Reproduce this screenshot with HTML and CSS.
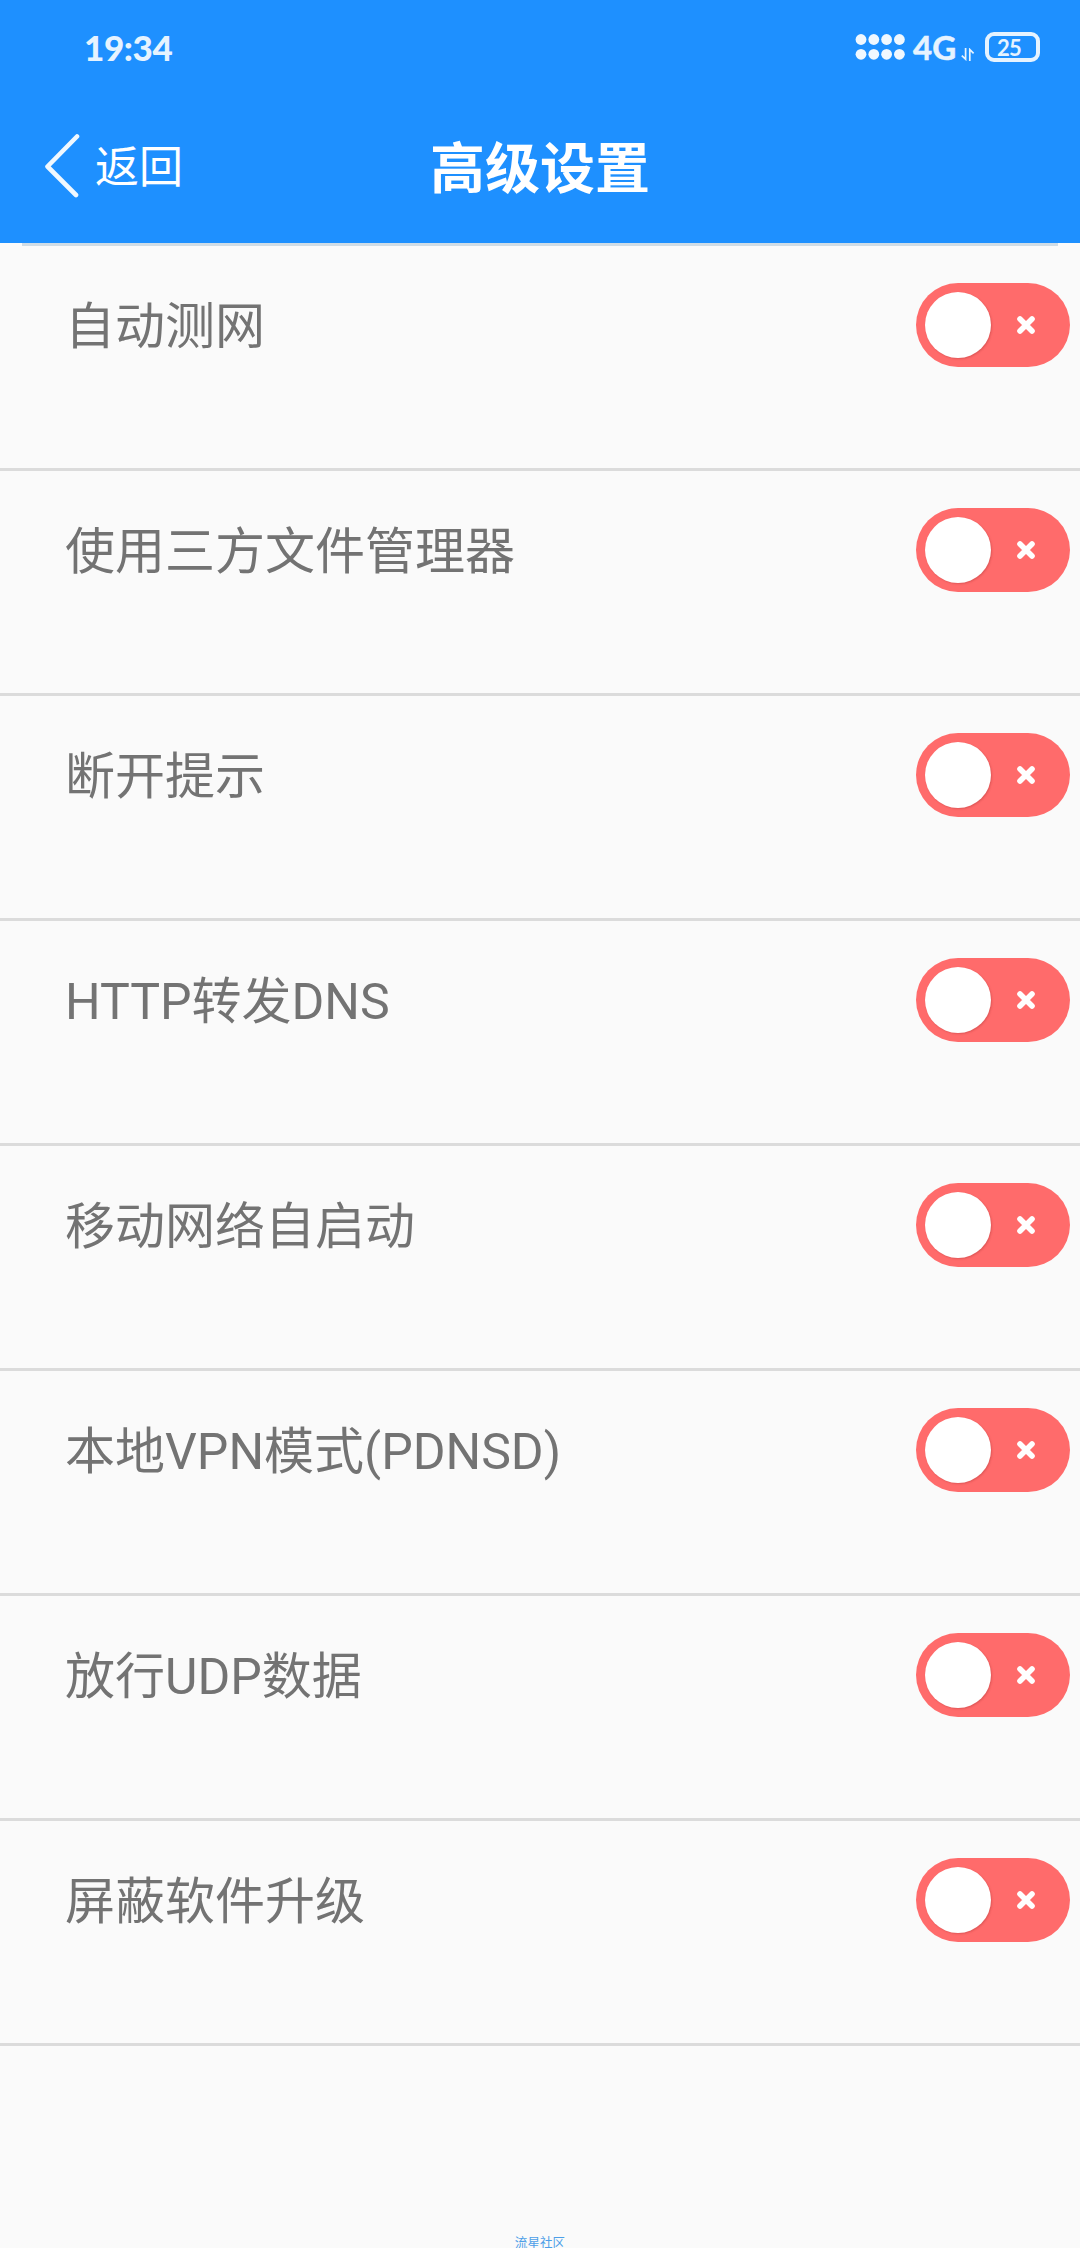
FILE: index.html
```html
<!DOCTYPE html>
<html lang="zh-CN">
<head>
<meta charset="utf-8">
<title>高级设置</title>
<link rel="stylesheet" href="styles.css">
</head>
<body>
<div class="screen">
  <header class="header">
    <div class="status">
      <span class="clock">19:34</span>
      <svg class="signal" width="50" height="28" viewBox="0 0 50 28" fill="#f0f8ff">
        <circle cx="6" cy="6.5" r="5.4"/><circle cx="18.8" cy="6.5" r="5.4"/><circle cx="31.6" cy="6.5" r="5.4"/><circle cx="44.4" cy="6.5" r="5.4"/>
        <circle cx="6" cy="21.3" r="5.4"/><circle cx="18.8" cy="21.3" r="5.4"/><circle cx="31.6" cy="21.3" r="5.4"/><circle cx="44.4" cy="21.3" r="5.4"/>
      </svg>
      <span class="network">4G</span>
      <svg class="data" width="14" height="13" viewBox="0 0 14 13" fill="none" stroke="#e6f3ff" stroke-width="1.7">
        <path d="M4.6 0v11.2L.8 7.6M8.8 13V1.5l3.8 3.8"/>
      </svg>
      <span class="battery">25</span>
    </div>
    <nav class="navbar">
      <a class="back">
        <svg width="36" height="64" viewBox="0 0 36 64" fill="none" stroke="#f0f8ff" stroke-width="4.6" stroke-linecap="round" stroke-linejoin="round">
          <path d="M33 2.5L3.5 32.5L32 61"/>
        </svg>
        <span class="back-text">返回</span>
      </a>
      <h1 class="title">高级设置</h1>
    </nav>
  </header>
  <main class="list">
    <div class="row"><span class="label">自动测网</span><span class="toggle"><svg class="cross" viewBox="0 0 20 20"><path d="M4 4l12 12M16 4L4 16"/></svg></span></div>
    <div class="row"><span class="label">使用三方文件管理器</span><span class="toggle"><svg class="cross" viewBox="0 0 20 20"><path d="M4 4l12 12M16 4L4 16"/></svg></span></div>
    <div class="row"><span class="label">断开提示</span><span class="toggle"><svg class="cross" viewBox="0 0 20 20"><path d="M4 4l12 12M16 4L4 16"/></svg></span></div>
    <div class="row"><span class="label">HTTP转发DNS</span><span class="toggle"><svg class="cross" viewBox="0 0 20 20"><path d="M4 4l12 12M16 4L4 16"/></svg></span></div>
    <div class="row"><span class="label">移动网络自启动</span><span class="toggle"><svg class="cross" viewBox="0 0 20 20"><path d="M4 4l12 12M16 4L4 16"/></svg></span></div>
    <div class="row"><span class="label">本地VPN模式(PDNSD)</span><span class="toggle"><svg class="cross" viewBox="0 0 20 20"><path d="M4 4l12 12M16 4L4 16"/></svg></span></div>
    <div class="row"><span class="label">放行UDP数据</span><span class="toggle"><svg class="cross" viewBox="0 0 20 20"><path d="M4 4l12 12M16 4L4 16"/></svg></span></div>
    <div class="row"><span class="label">屏蔽软件升级</span><span class="toggle"><svg class="cross" viewBox="0 0 20 20"><path d="M4 4l12 12M16 4L4 16"/></svg></span></div>
  </main>
  <footer class="footer">流星社区</footer>
</div>
</body>
</html>
```
FILE: styles.css
```css
* { box-sizing: border-box; }

body {
  margin: 0;
  background: #fafafa;
  font-family: Roboto, "Noto Sans CJK SC", sans-serif;
}

.screen {
  display: flex;
  flex-direction: column;
  width: 1080px;
  height: 2248px;
  overflow: hidden;
}

.header {
  height: 243px;
  background: #1e90ff;
  color: #fff;
}

.status {
  display: flex;
  align-items: center;
  height: 95px;
  padding: 0 40px 2px 84px;
  font-family: Lato, "Noto Sans", sans-serif;
  font-weight: 900;
  color: #e6f3ff;
}

.clock {
  font-size: 35px;
  letter-spacing: -0.4px;
}

.signal {
  margin-left: auto;
}

.network {
  width: 48px;
  margin-left: 8px;
  font-size: 33px;
  font-weight: 700;
  -webkit-text-stroke: 0.5px #e6f3ff;
}

.data {
  margin: 16px 10px 0 0;
}

.battery {
  width: 55px;
  height: 30px;
  padding-left: 8px;
  border: 4px solid #e6f3ff;
  border-radius: 9px;
  font-size: 22px;
  font-weight: 700;
  line-height: 24px;
  letter-spacing: -0.8px;
}

.navbar {
  display: grid;
  grid-template-columns: 1fr auto 1fr;
  align-items: center;
  height: 148px;
  padding: 0 44px;
}

.back {
  display: flex;
  align-items: center;
  gap: 15px;
  height: 64px;
  margin-top: -6px;
  font-size: 44px;
  line-height: 64px;
}

.back-text {
  padding-top: 3px;
}

.title {
  margin: 0;
  padding-bottom: 1px;
  font-size: 55px;
  font-weight: 700;
  line-height: 80px;
}

.list::before {
  content: "";
  display: block;
  height: 3px;
  margin: 0 22px;
  background: #cfdce6;
}

.row {
  display: flex;
  justify-content: space-between;
  align-items: flex-start;
  height: 225px;
  padding: 36.5px 10px 0 65px;
  border-bottom: 3px solid #dbdbdb;
}

.label {
  margin-top: 8.5px;
  font-size: 50px;
  line-height: 72px;
  color: #737373;
}

.toggle {
  display: flex;
  align-items: center;
  justify-content: space-between;
  width: 154px;
  height: 84px;
  padding: 0 34px 0 9px;
  border-radius: 42px;
  background: #ff6b6b;
}

.toggle::before {
  content: "";
  width: 66px;
  height: 66px;
  border-radius: 50%;
  background: #fff;
  box-shadow: 1px 1px 2px rgba(150, 40, 40, 0.3);
}

.cross {
  width: 20px;
  height: 20px;
  fill: none;
  stroke: #fff;
  stroke-width: 5.6;
  stroke-linecap: round;
}

.footer {
  height: 15px;
  margin-top: auto;
  font-size: 12.6px;
  line-height: 19px;
  text-align: center;
  color: #4d9fe8;
}
```
